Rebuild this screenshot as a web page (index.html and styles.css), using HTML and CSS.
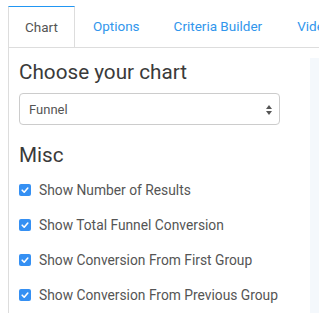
FILE: index.html
```html
<!DOCTYPE html>
<html>
<head>
<meta charset="utf-8">
<link rel="stylesheet" href="styles.css">
</head>
<body>
<div class="wrap">
  <div class="main">
    <ul class="tabs">
      <li class="tab active">Chart</li>
      <li class="tab">Options</li>
      <li class="tab">Criteria Builder</li>
      <li class="tab">Videos</li>
    </ul>
    <div class="panel">
      <h2>Choose your chart</h2>
      <div class="select">
        <span>Funnel</span>
        <svg width="8" height="12" viewBox="0 0 8 12"><path d="M4 1 L7 5 L1 5 Z" fill="#555"/><path d="M4 11 L7 7 L1 7 Z" fill="#555"/></svg>
      </div>
      <h2 class="misc">Misc</h2>
      <div class="checks">
        <label class="check"><span class="box"><svg width="12" height="12" viewBox="0 0 12 12"><path d="M3.2 6.2 L5.2 8.2 L8.8 4" fill="none" stroke="#fff" stroke-width="1.6" stroke-linecap="round" stroke-linejoin="round"/></svg></span>Show Number of Results</label>
        <label class="check"><span class="box"><svg width="12" height="12" viewBox="0 0 12 12"><path d="M3.2 6.2 L5.2 8.2 L8.8 4" fill="none" stroke="#fff" stroke-width="1.6" stroke-linecap="round" stroke-linejoin="round"/></svg></span>Show Total Funnel Conversion</label>
        <label class="check"><span class="box"><svg width="12" height="12" viewBox="0 0 12 12"><path d="M3.2 6.2 L5.2 8.2 L8.8 4" fill="none" stroke="#fff" stroke-width="1.6" stroke-linecap="round" stroke-linejoin="round"/></svg></span>Show Conversion From First Group</label>
        <label class="check"><span class="box"><svg width="12" height="12" viewBox="0 0 12 12"><path d="M3.2 6.2 L5.2 8.2 L8.8 4" fill="none" stroke="#fff" stroke-width="1.6" stroke-linecap="round" stroke-linejoin="round"/></svg></span>Show Conversion From Previous Group</label>
      </div>
    </div>
  </div>
  <div class="side"></div>
</div>
</body>
</html>
```
FILE: styles.css
```css
html, body { margin: 0; padding: 0; background: #fff; overflow: hidden; }
body { font-family: Roboto, "Liberation Sans", sans-serif; color: #333; }
.wrap { position: relative; padding: 6px 0 0 8px; width: 319px; height: 313px; box-sizing: border-box; overflow: hidden; }
.main { width: 311px; }
.tabs { list-style: none; margin: 0; padding: 0; display: flex; border-bottom: 1px solid #ddd; height: 41px; width: 311px; overflow: hidden; }
.tab { font-size: 13.5px; color: #3196ec; padding: 0 17px 0 18px; line-height: 41px; white-space: nowrap; flex: none; }
.tab.active { color: #555; border: 1px solid #ddd; border-top: 1px solid #2196f3; border-bottom: 1px solid #fff; padding: 0 16px 0 16px; line-height: 40px; height: 40px; }
.tab:nth-child(2) { padding-left: 18px; padding-right: 17px; }
.tab:nth-child(3) { padding-left: 17px; padding-right: 17px; }
.panel { border-left: 1px solid #ddd; padding: 12px 0 0 10px; height: 280px; }
h2 { font-weight: 400; font-size: 20.7px; margin: 0; line-height: 24px; color: #3a3a3a; }
.select { margin-top: 9px; width: 261px; height: 32px; border: 1px solid #ccc; border-radius: 4px; display: flex; align-items: center; justify-content: space-between; padding: 0 6px 0 9px; box-sizing: border-box; font-size: 13px; color: #555; }
.select svg { margin-top: 1px; }
.misc { margin-top: 18px; }
.checks { margin-top: 15px; display: flex; flex-direction: column; gap: 19px; }
.check { display: flex; align-items: center; font-size: 13.8px; color: #555; line-height: 16px; height: 16px; }
.box { width: 12px; height: 12px; border-radius: 2px; background: #3590f3; margin-right: 8px; display: inline-flex; }
.side { position: absolute; left: 310px; top: 58px; width: 20px; height: 260px; background: #f4f8fc; }
```
